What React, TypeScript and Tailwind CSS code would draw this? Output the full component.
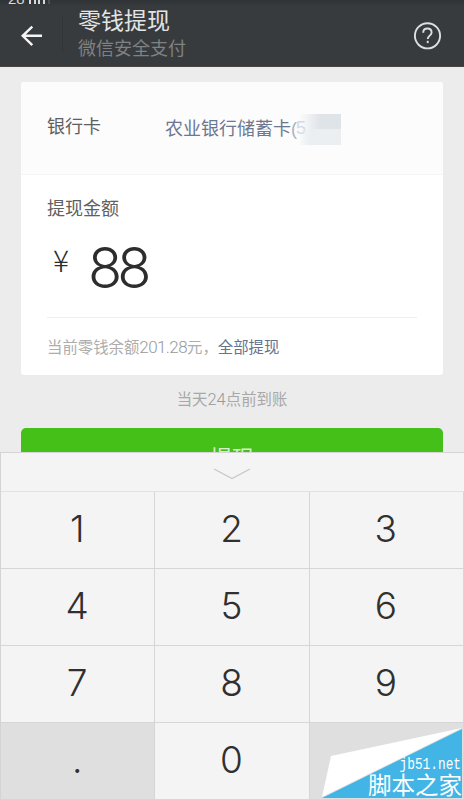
const keys = ["1", "2", "3", "4", "5", "6", "7", "8", "9", ".", "0", ""];

function Header() {
  return (
    <header className="relative flex h-[67px] items-start overflow-hidden border-b border-[#4a4545] bg-[#383b3e] bg-linear-to-b from-[#303336] to-[#383b3e] to-10%">
      <div className="absolute -top-[9px] left-2 flex items-end text-[15px] leading-[15px] text-[#d8d8d8]">
        <span>28</span>
        <svg width="24" height="15" viewBox="0 0 24 15" className="ml-1" stroke="#d8d8d8" strokeWidth="2">
          <path d="M1 8v5M6 8v5M10 8v5M15 8v5" />
          <path d="M20 8v5" stroke="#67696b" strokeWidth="1" />
        </svg>
      </div>
      <button className="mt-6 ml-5 h-6 w-[22px]" aria-label="返回">
        <svg width="22" height="24" viewBox="0 0 22 24" fill="none" stroke="#f4f4f4" strokeWidth="2.4">
          <path d="M12.3 2.6 2.7 11.8l9.6 9.4M2.7 11.8H22" />
        </svg>
      </button>
      <div className="mt-4 ml-5 h-9 w-px bg-[#323538]" />
      <div className="ml-[15px] flex-1">
        <h1 className="mt-[6px] text-[23px] leading-[30px] text-[#e4e4e4]">零钱提现</h1>
        <p className="text-[18px] leading-[26px] text-[#7f8183]">微信安全支付</p>
      </div>
      <button className="mt-[22px] mr-[22px]" aria-label="帮助">
        <svg width="28" height="28" viewBox="0 0 28 28" fill="none" stroke="#dddfe0" strokeWidth="1.9">
          <circle cx="13.5" cy="13.8" r="12.6" />
          <path d="M9.2 10.7c0-2.6 1.8-4.2 4.2-4.2s4.2 1.6 4.2 3.9c0 3-3.9 3.4-3.9 6.6" />
          <path d="M13.7 18.8v2.3" />
        </svg>
      </button>
    </header>
  );
}

function Card() {
  return (
    <section className="mx-[21px] mt-[15px] h-[293px] overflow-hidden rounded-[3px] bg-white">
      <div className="relative flex h-[93px] items-center border-b border-[#f5f5f5] bg-[#fcfcfc] pl-[26px] text-[18px]">
        <span className="-mt-[2px] w-[118px] text-[#606060]">银行卡</span>
        <span className="mt-[2px] text-[#6c7792]">
          农业银行储蓄卡<span className="text-[#a9b2c2]">(</span>
        </span>
        <span className="-ml-px text-[#d2dae5]">5</span>
        <div className="absolute top-8 left-[278px] h-[31px] w-[42px] bg-linear-to-r from-transparent to-[#dfe4e9] to-50%" />
        <div className="absolute top-[47px] left-[278px] h-4 w-[42px] bg-linear-to-r from-transparent to-[#eceff2] to-40%" />
      </div>
      <div className="px-[26px]">
        <p className="pt-[21px] text-[18px] leading-[26px] text-[#606060]">提现金额</p>
        <div className="flex h-[96px] items-start border-b border-[#eee] text-[#2d2d2d]">
          <span className="mt-[17px] ml-[6px] w-[35px] font-['Noto_Sans_CJK_SC',sans-serif] text-[30px] leading-[40px] font-light">
            ¥
          </span>
          <span className="mt-[14px] font-[Inter,sans-serif] text-[56px] leading-[64px] font-light tracking-[-5px]">
            88
          </span>
        </div>
        <p className="mt-[16px] text-[15.4px] leading-[26px] text-[#adadad]">
          当前零钱余额
          <span className="font-[Roboto,sans-serif] text-[17px] font-light tracking-[-0.6px] text-[#999]">201.28</span>
          元，<span className="text-[#66738f]">全部提现</span>
        </p>
      </div>
    </section>
  );
}

function Keypad() {
  return (
    <div className="absolute inset-x-0 top-[452px] h-[348px] border-t border-l border-[#d4d4d4] bg-[#f4f4f4]">
      <div className="flex h-[38px] justify-center pt-[15px] pr-[2px]">
        <svg width="38" height="12" viewBox="0 0 38 12" fill="none" stroke="#c8c8c8" strokeWidth="1.4">
          <path d="m1 1 18 9.5L37 1" />
        </svg>
      </div>
      <div className="grid h-[309px] grid-cols-3 grid-rows-4 border-t border-[#e2e2e2]">
        {keys.map((key, i) => (
          <button
            key={i}
            className={`border-r border-b border-[#d6d6d6] pr-[2px] pb-[3px] font-[Inter,sans-serif] text-[37px] leading-none font-light tracking-[-1px] text-[#303030] ${
              key === "." || key === "" ? "bg-[#dfdfdf]" : ""
            }`}
          >
            {key}
          </button>
        ))}
      </div>
    </div>
  );
}

function Watermark() {
  return (
    <div className="absolute right-0 bottom-0 h-[73px] w-[143px] text-white">
      <svg width="143" height="73" viewBox="0 0 143 73" className="absolute inset-0">
        <path d="M10 29 141 1 1 70Z" fill="#fff" />
        <path d="M141 2v69H1Z" fill="#42b4e6" />
      </svg>
      <div className="absolute right-[3px] bottom-[27px] origin-bottom scale-y-125 font-['Liberation_Mono',monospace] text-[12.8px] leading-[13px]">
        jb51.net
      </div>
      <div className="absolute right-[2px] bottom-[2px] text-[23.5px] leading-[24px] whitespace-nowrap">脚本之家</div>
    </div>
  );
}

export default function App() {
  return (
    <div className="relative h-[800px] w-[464px] overflow-hidden bg-[#ececec] font-['Liberation_Sans','Noto_Sans_CJK_SC',sans-serif]">
      <Header />
      <Card />
      <p className="mt-3 text-center text-[15.4px] leading-[26px] text-[#a8a8a8]">
        当天<span className="font-[Roboto,sans-serif] text-[16.5px] font-light text-[#999]">24</span>点前到账
      </p>
      <button className="mx-[21px] mt-[15px] block h-[60px] w-[422px] rounded-[5px] bg-[#45c018] text-[22px] text-[#d8f0cf]">
        提现
      </button>
      <Keypad />
      <Watermark />
    </div>
  );
}
